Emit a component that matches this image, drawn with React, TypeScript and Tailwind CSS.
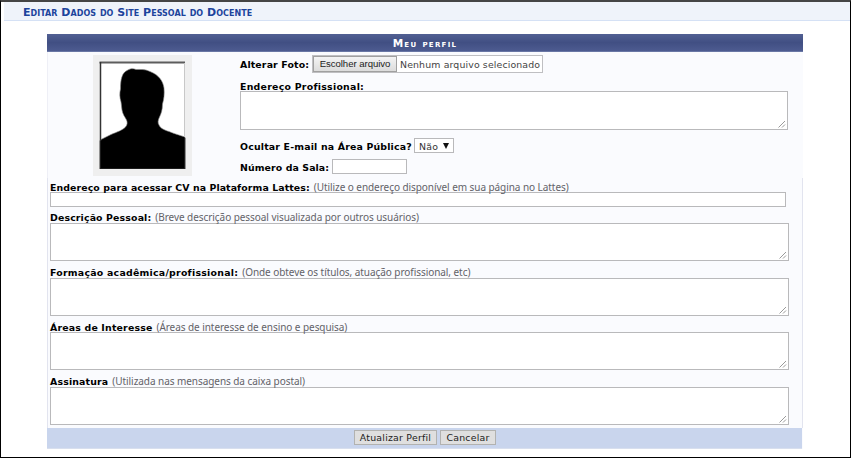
import type { ReactNode } from "react";

function Grip() {
  return (
    <svg className="absolute right-[1px] bottom-[1px]" width="8" height="8" viewBox="0 0 8 8" fill="none" stroke="#8f8f8f" strokeWidth="0.9">
      <path d="M0.5 7.5 L7 1 M4 7.5 L7 4.5" />
    </svg>
  );
}

function TextArea({ className }: { className: string }) {
  return (
    <div className={`relative border border-[#b9b9bb] bg-white ${className}`}>
      <Grip />
    </div>
  );
}

function Label({ children, className = "tracking-[0.26px]" }: { children: ReactNode; className?: string }) {
  return <span className={`font-bold text-black ${className}`}>{children}</span>;
}

function Hint({ children }: { children: ReactNode }) {
  return <span className="font-['Noto_Sans',Tahoma,sans-serif] text-[10px] tracking-[-0.06px] text-[#626268]">{children}</span>;
}

function Row({ children, className = "" }: { children: ReactNode; className?: string }) {
  return <div className={`z-10 flex items-center whitespace-nowrap ${className}`}>{children}</div>;
}

function Photo() {
  return (
    <div className="mt-[3px] ml-[45px] h-[121px] w-[99px] shrink-0 bg-[#efefef] pt-[6px] pl-[6px]">
      <svg width="87" height="108" viewBox="0 0 87 108">
        <rect x="1" y="1" width="85" height="107" fill="#fff" />
        <path d="M1 108 V79 L12 73.5 C18 71 24 69 26.5 66 C28.5 64 28.5 61 27.5 59 C26 56 23.5 53 23 49 C22.500 46 22.500 44 22 41 C20.500 36 20.500 32 21.500 28 C21.500 18 23 12 28 9.500 C31 7.500 34 7 37 8.500 C42 8.500 46 8 51 10.500 C60 14 64 20 65 27 C65.500 33 65 38 63.500 43 C63.500 49 62 53 60.500 56 C59 59 58.500 62 60 64 C61 67 65 69 70 70.500 C76 73 80 74 86 76 V108 Z" fill="#000" stroke="#888" strokeWidth="0.6" />
        <path d="M1 80 V108 H86 V77" fill="none" stroke="#000" strokeWidth="0.6" />
        <path d="M0.5 1.5 H86" stroke="#5d5d5d" strokeWidth="2" />
        <path d="M1.5 1 V80" stroke="#333" strokeWidth="1.5" />
        <path d="M85.5 2 V76" stroke="#c8c8c8" />
      </svg>
    </div>
  );
}

export default function App() {
  return (
    <div className="flex h-[458px] w-[851px] flex-col overflow-hidden border-x border-t-2 border-b border-x-black border-t-[#454545] border-b-black bg-white font-['DejaVu_Sans',Verdana,sans-serif] text-[9.4px] leading-[13px]">
      <header className="ml-[3px] flex h-[19px] shrink-0 items-center border-b border-[#d5e1f5] bg-[#eff3fa] pt-[2px] pl-[19px] text-[#1d449c]">
        <h1 className="text-[11px] font-bold tracking-[0.03px] whitespace-nowrap [font-variant:small-caps]">Editar Dados do Site Pessoal do Docente</h1>
      </header>

      <main className="mt-[13px] ml-[46px] flex h-[415px] w-[756px] shrink-0 flex-col bg-[#fafbfe]">
        <div className="flex h-[18px] shrink-0 items-center justify-center border-b border-[#6977a5] bg-linear-to-b from-[#526093] via-[#414f83] to-[#4d5b90] pt-[1px]">
          <h2 className="text-[10.5px] font-bold tracking-[1.3px] text-white [font-variant:small-caps]">Meu perfil</h2>
        </div>

        <section className="flex h-[126px] shrink-0 border-l border-[#eeeff6]">
          <Photo />
          <div className="ml-[48px] flex flex-col">
            <Row className="mt-[3px] h-[18px]">
              <Label className="w-[72px] tracking-[0.14px]">Alterar Foto:</Label>
              <div className="flex h-[18px] w-[231px] items-center border border-[#bfbfc2] bg-white">
                <button className="h-[16px] w-[84px] shrink-0 border border-[#a0a0a0] bg-linear-to-b from-[#f4f4f4] to-[#dcdcdc] font-['Liberation_Sans',Arial,sans-serif] text-[9.6px] leading-[14px] tracking-[-0.05px] text-[#222]">Escolher arquivo</button>
                <span className="ml-[3px] tracking-[0.13px] text-[#444]">Nenhum arquivo selecionado</span>
              </div>
            </Row>
            <Row className="mt-[7px] h-[13px]"><Label>Endereço Profissional:</Label></Row>
            <TextArea className="-mt-[2px] h-[39px] w-[548px]" />
            <Row className="mt-[8px] h-[15px]">
              <Label className="w-[174px] pt-[1px] tracking-[0.18px]">Ocultar E-mail na Área Pública?</Label>
              <div className="flex h-[15px] w-[40px] items-center border border-[#b9b9bb] bg-white pl-[4px] text-[#333]">
                <span className="pt-[1px] tracking-[0.2px]">Não</span>
                <svg className="ml-[5px]" width="6" height="6" viewBox="0 0 6 6"><path d="M0 0H6L3 6Z" fill="#111" /></svg>
              </div>
            </Row>
            <Row className="mt-[6px] h-[15px]">
              <Label className="w-[92px] pt-[1px] tracking-[0.1px]">Número da Sala:</Label>
              <div className="h-[15px] w-[75px] border border-[#b9b9bb] bg-white" />
            </Row>
          </div>
        </section>

        <section className="flex h-[250px] shrink-0 flex-col border-x border-[#e2e4ef] pl-[2px]">
          <Row className="mt-[3px] h-[12px] gap-1">
            <Label className="tracking-[0.09px]">Endereço para acessar CV na Plataforma Lattes:</Label>
            <Hint>(Utilize o endereço disponível em sua página no Lattes)</Hint>
          </Row>
          <div className="-mt-[1px] h-[15px] w-[736px] shrink-0 border border-[#b9b9bb] bg-white" />
          <Row className="mt-[4px] h-[13px] gap-1">
            <Label className="tracking-[0.14px]">Descrição Pessoal:</Label>
            <Hint>(Breve descrição pessoal visualizada por outros usuários)</Hint>
          </Row>
          <TextArea className="-mt-[1px] h-[38px] w-[739px] shrink-0" />
          <Row className="mt-[5px] h-[13px] gap-1">
            <Label className="tracking-[0.25px]">Formação acadêmica/profissional:</Label>
            <Hint>(Onde obteve os títulos, atuação profissional, etc)</Hint>
          </Row>
          <TextArea className="-mt-[1px] h-[38px] w-[739px] shrink-0" />
          <Row className="mt-[5px] h-[13px] gap-1">
            <Label className="tracking-[0.18px]">Áreas de Interesse</Label>
            <Hint>(Áreas de interesse de ensino e pesquisa)</Hint>
          </Row>
          <TextArea className="-mt-[2px] h-[38px] w-[739px] shrink-0" />
          <Row className="mt-[5px] h-[13px] gap-1">
            <Label className="tracking-[0.16px]">Assinatura</Label>
            <Hint>(Utilizada nas mensagens da caixa postal)</Hint>
          </Row>
          <TextArea className="-mt-[1px] h-[38px] w-[739px] shrink-0" />
        </section>

        <footer className="flex h-[21px] w-[755px] shrink-0 gap-[3px] border-b border-[#d8dfee] bg-[#c9d5ed] pt-[2px] pl-[307px]">
          <button className="h-[15px] w-[83px] border border-[#b2b2b0] bg-[#dfdfdf] leading-[14px] tracking-[0.22px] whitespace-nowrap text-[#222]">Atualizar Perfil</button>
          <button className="h-[15px] w-[56px] border border-[#b2b2b0] bg-[#dfdfdf] leading-[14px] tracking-[0.22px] whitespace-nowrap text-[#222]">Cancelar</button>
        </footer>
      </main>
    </div>
  );
}
